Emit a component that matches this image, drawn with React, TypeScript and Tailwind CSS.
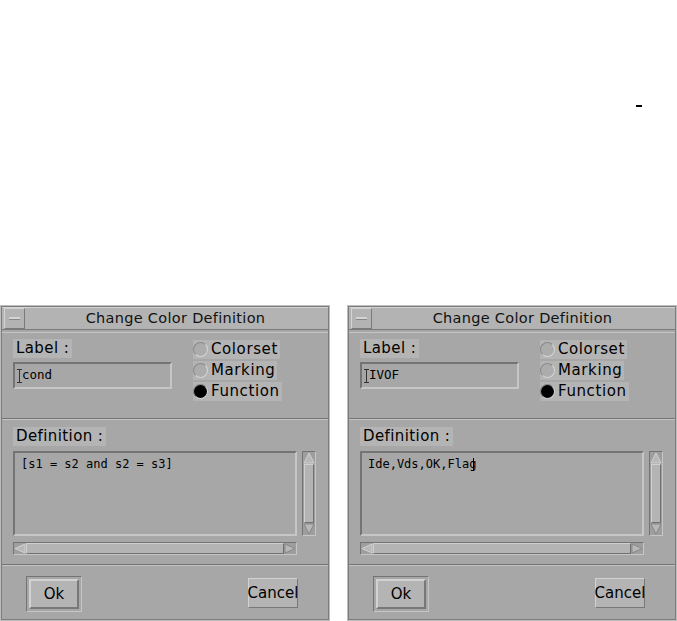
import React from 'react';

const ui = { fontFamily: '"DejaVu Sans", sans-serif' };
const mono = { fontFamily: '"DejaVu Sans Mono", monospace' };

function Radio({ text, on }: { text: string; on?: boolean }) {
  return (
    <div className="flex items-center h-[19px] bg-[#b4b4b4] pr-[2px]">
      <div
        className={`w-[15px] h-[15px] rounded-full border-[1.5px] border-t-[#8a8a8a] border-l-[#8a8a8a] border-b-[#d6d6d6] border-r-[#d6d6d6] ${
          on ? 'bg-black' : 'bg-[#acacac]'
        }`}
      />
      <span className="ml-[3px] text-[15px] leading-none text-black tracking-[0.6px]">{text}</span>
    </div>
  );
}

function Cursor() {
  return (
    <span className="inline-flex flex-col items-center w-[5px] h-[14px] align-middle">
      <span className="w-[5px] h-[1px] bg-[#333]" />
      <span className="w-[1px] flex-1 bg-[#333]" />
      <span className="w-[5px] h-[1px] bg-[#333]" />
    </span>
  );
}

function Dialog({ label, def }: { label: string; def: React.ReactNode }) {
  return (
    <div className="w-[330px] h-[316px] bg-[#bdbdbd] p-[1px]" style={ui}>
      <div className="h-full flex flex-col bg-[#a7a7a7] border border-[#7c7c7c]">
        {/* title bar */}
        <div className="h-[23px] flex border-b border-[#7a7a7a] bg-[#b3b3b3] border-t border-t-[#d2d2d2]">
          <div className="w-[21px] ml-[2px] flex items-center justify-center border border-t-[#d4d4d4] border-l-[#d4d4d4] border-r-[#7a7a7a] border-b-[#7a7a7a]">
            <div className="w-[11px] h-[3px] bg-[#d4d4d4] border-b border-[#888]" />
          </div>
          <div className="flex-1 flex items-center justify-center text-[14.5px] tracking-[0.3px] text-[#111] pr-[2px]">
            Change Color Definition
          </div>
        </div>
        <div className="h-[3px] border-b border-[#c4c4c4]" />

        {/* label + radios */}
        <div className="h-[85px] flex pl-[11px] pt-[6px]">
          <div className="flex flex-col">
            <div className="self-start h-[19px] px-[3px] bg-[#b4b4b4] flex items-center text-[15px] tracking-[0.4px] text-black">
              Label :
            </div>
            <div className="mt-[4px] w-[159px] h-[27px] border-2 border-t-[#747474] border-l-[#747474] border-b-[#c6c6c6] border-r-[#c6c6c6] flex items-center pl-[2px] text-[12.5px] text-black" style={mono}>
              <Cursor />
              {label}
            </div>
          </div>
          <div className="ml-[21px] mt-[1px] flex flex-col gap-[2px] items-start">
            <Radio text="Colorset" />
            <Radio text="Marking" />
            <Radio text="Function" on />
          </div>
        </div>

        <div className="border-t border-[#747474] border-b border-b-[#c4c4c4]" />

        {/* definition */}
        <div className="h-[144px] pl-[11px] pt-[7px] flex flex-col">
          <div className="self-start h-[19px] px-[3px] bg-[#b4b4b4] flex items-center text-[15px] tracking-[0.4px] text-black">
            Definition :
          </div>
          <div className="mt-[5px] flex">
            <div className="w-[284px] h-[85px] border-2 border-t-[#747474] border-l-[#747474] border-b-[#c6c6c6] border-r-[#c6c6c6] pl-[6px] pt-[2px] text-[12px] text-black" style={mono}>
              {def}
            </div>
            <div className="ml-[5px] w-[14px] h-[85px] flex flex-col border border-t-[#747474] border-l-[#747474] border-b-[#c6c6c6] border-r-[#c6c6c6] bg-[#9e9e9e]">
              <svg width="12" height="12" viewBox="0 0 12 12">
                <polygon points="6,1 11,11 1,11" fill="#b8b8b8" stroke="#d2d2d2" />
              </svg>
              <div className="flex-1 mx-[1px] bg-[#b4b4b4] border border-t-[#d0d0d0] border-l-[#d0d0d0] border-b-[#707070] border-r-[#707070]" />
              <svg width="12" height="12" viewBox="0 0 12 12">
                <polygon points="1,1 11,1 6,11" fill="#b8b8b8" stroke="#888" />
              </svg>
            </div>
          </div>
          <div className="mt-[6px] w-[284px] h-[13px] flex border border-t-[#747474] border-l-[#747474] border-b-[#c6c6c6] border-r-[#c6c6c6] bg-[#9e9e9e]">
            <svg width="12" height="11" viewBox="0 0 12 11">
              <polygon points="1,5.5 11,1 11,10" fill="#b8b8b8" stroke="#d2d2d2" />
            </svg>
            <div className="flex-1 bg-[#b4b4b4] border border-t-[#d0d0d0] border-l-[#d0d0d0] border-b-[#707070] border-r-[#707070]" />
            <svg width="12" height="11" viewBox="0 0 12 11">
              <polygon points="1,1 11,5.5 1,10" fill="#b8b8b8" stroke="#888" />
            </svg>
          </div>
        </div>

        <div className="border-t border-[#747474] border-b border-b-[#c4c4c4]" />

        {/* buttons */}
        <div className="flex-1 flex items-start justify-between pl-[24px] pr-[30px] pt-[10px]">
          <div className="p-[2px] border border-t-[#747474] border-l-[#747474] border-b-[#c6c6c6] border-r-[#c6c6c6]">
            <div className="w-[50px] h-[30px] bg-[#b4b4b4] border-2 border-t-[#d2d2d2] border-l-[#d2d2d2] border-b-[#787878] border-r-[#787878] flex items-center justify-center text-[15px] text-black">
              Ok
            </div>
          </div>
          <div className="mt-[2px] w-[50px] h-[30px] bg-[#b4b4b4] border border-t-[#d2d2d2] border-l-[#d2d2d2] border-b-[#787878] border-r-[#787878] flex items-center justify-center text-[15px] text-black">
            Cancel
          </div>
        </div>
      </div>
    </div>
  );
}

export default function App() {
  return (
    <div className="relative w-[677px] h-[621px] bg-white">
      <div className="absolute left-[636px] top-[105px] w-[6px] h-[1.5px] bg-black" />
      <div className="flex gap-[17px] pt-[305px]">
        <Dialog label="cond" def="[s1 = s2 and s2 = s3]" />
        <Dialog
          label="IVOF"
          def={
            <span className="inline-flex items-center">
              Ide,Vds,OK,Flag
              <span className="inline-block w-[4px] h-[13px] border-l-[1.5px] border-black -ml-[3px]" />
            </span>
          }
        />
      </div>
    </div>
  );
}
